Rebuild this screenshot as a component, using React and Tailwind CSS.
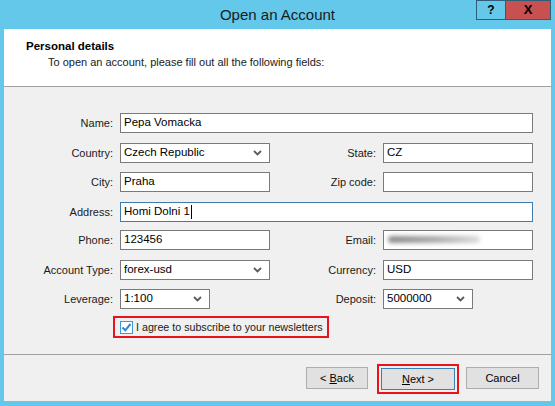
import React from "react";

const font = { fontFamily: '"Liberation Sans", Arial, sans-serif' };

function Chevron() {
  return (
    <svg width="9" height="6" viewBox="0 0 9 6" className="shrink-0">
      <path d="M1 1 L4.5 4.5 L8 1" fill="none" stroke="#5a5a5a" strokeWidth="1.8" />
    </svg>
  );
}

function Input({ value, w = "w-[150px]", focused, children }) {
  return (
    <div
      className={`${w} h-[20px] bg-white border ${focused ? "border-[#3d7bad]" : "border-[#7a7a7a]"} flex items-center pl-[3px] text-[11.5px] text-black overflow-hidden relative`}
    >
      {value}
      {children}
    </div>
  );
}

function Select({ value, w = "w-[150px]" }) {
  return (
    <div className={`${w} h-[20px] bg-white border border-[#7a7a7a] flex items-center justify-between pl-[3px] pr-[7px] text-[11.5px] text-black`}>
      <span>{value}</span>
      <Chevron />
    </div>
  );
}

function Label({ children, w = "w-[116px]" }) {
  return <div className={`${w} text-right text-[11px] text-[#1a1a1a] pr-[7px] shrink-0`}>{children}</div>;
}

function Row({ className = "", children }) {
  return <div className={`flex items-center h-[20px] ${className}`}>{children}</div>;
}

export default function App() {
  return (
    <div className="w-[555px] h-[406px] bg-[#63c8ea] flex flex-col overflow-hidden" style={font}>
      {/* Title bar */}
      <div className="h-[29px] relative flex items-center justify-center shrink-0">
        <div className="text-[15px] text-[#1b1b1b] mt-[1px]">Open an Account</div>
        <div className="absolute top-0 right-[4px] flex h-[20px]">
          <div className="w-[29px] h-[20px] border border-[#2f5f78] border-r-0 flex items-center justify-center text-[12px] font-bold text-black">?</div>
          <div className="w-[46px] h-[20px] bg-[#c75050] border border-[#2f5f78] flex items-center justify-center text-[13px] font-bold text-black">X</div>
        </div>
      </div>
      {/* Content */}
      <div className="flex-1 mx-[4px] mb-[5px] bg-[#f0f0f0] flex flex-col">
        <div className="h-[58px] bg-white border-b border-[#a0a0a0] pl-[22px] pt-[10px] shrink-0">
          <div className="text-[11.5px] font-bold text-black leading-[15px]">Personal details</div>
          <div className="text-[11px] text-[#1a1a1a] leading-[15px] pl-[22px] mt-[1px]">
            To open an account, please fill out all the following fields:
          </div>
        </div>
        <div className="flex flex-col pt-[26px]">
          <Row>
            <Label>Name:</Label>
            <Input value="Pepa Vomacka" w="w-[413px]" />
          </Row>
          <Row className="mt-[10px]">
            <Label>Country:</Label>
            <Select value="Czech Republic" />
            <Label w="w-[113px]">State:</Label>
            <Input value="CZ" />
          </Row>
          <Row className="mt-[9px]">
            <Label>City:</Label>
            <Input value="Praha" />
            <Label w="w-[113px]">Zip code:</Label>
            <Input value="" />
          </Row>
          <Row className="mt-[10px]">
            <Label>Address:</Label>
            <Input value="Homi Dolni 1" w="w-[413px]" focused>
              <span className="w-px h-[14px] bg-black ml-[1px]" />
            </Input>
          </Row>
          <Row className="mt-[8px]">
            <Label>Phone:</Label>
            <Input value="123456" />
            <Label w="w-[113px]">Email:</Label>
            <Input value="">
              <div className="absolute left-[4px] top-[5px] w-[92px] h-[7px] rounded-full bg-gradient-to-r from-[#8a8a8a] via-[#a8a8a8] to-[#dcdcdc] blur-[2px]" />
            </Input>
          </Row>
          <Row className="mt-[10px]">
            <Label>Account Type:</Label>
            <Select value="forex-usd" />
            <Label w="w-[113px]">Currency:</Label>
            <Input value="USD" />
          </Row>
          <Row className="mt-[9px]">
            <Label>Leverage:</Label>
            <Select value="1:100" w="w-[90px]" />
            <Label w="w-[173px]">Deposit:</Label>
            <Select value="5000000" w="w-[90px]" />
          </Row>
          <div className="flex mt-[7px] ml-[109px]">
            <div className="h-[22px] border-2 border-[#e8141a] flex items-center pl-[5px] pr-[4px]">
              <div className="w-[13px] h-[13px] border border-[#3c9ad6] bg-white flex items-center justify-center">
                <svg width="11" height="11" viewBox="0 0 11 11">
                  <path d="M1.5 5.5 L4.3 8.3 L9.5 2" fill="none" stroke="#2a8ad4" strokeWidth="2" />
                </svg>
              </div>
              <span className="ml-[3px] text-[10.7px] text-[#1a1a1a]">I agree to subscribe to your newsletters</span>
            </div>
          </div>
        </div>
        <div className="mt-auto border-t border-[#a0a0a0] h-[47px] flex items-start pl-[302px] pt-[12px] shrink-0">
          <button className="w-[62px] h-[22px] bg-[#e1e1e1] border border-[#adadad] text-[11px] text-black">
            &lt; <u>B</u>ack
          </button>
          <div className="ml-[9px] -mt-[3px] p-[2px] border-2 border-[#e8141a]">
            <button className="w-[74px] h-[22px] bg-[#e1e1e1] border border-[#3c7fb1] text-[11px] text-black block">
              <u>N</u>ext &gt;
            </button>
          </div>
          <button className="ml-[7px] w-[73px] h-[22px] bg-[#e1e1e1] border border-[#adadad] text-[11px] text-black">
            Cancel
          </button>
        </div>
      </div>
    </div>
  );
}
